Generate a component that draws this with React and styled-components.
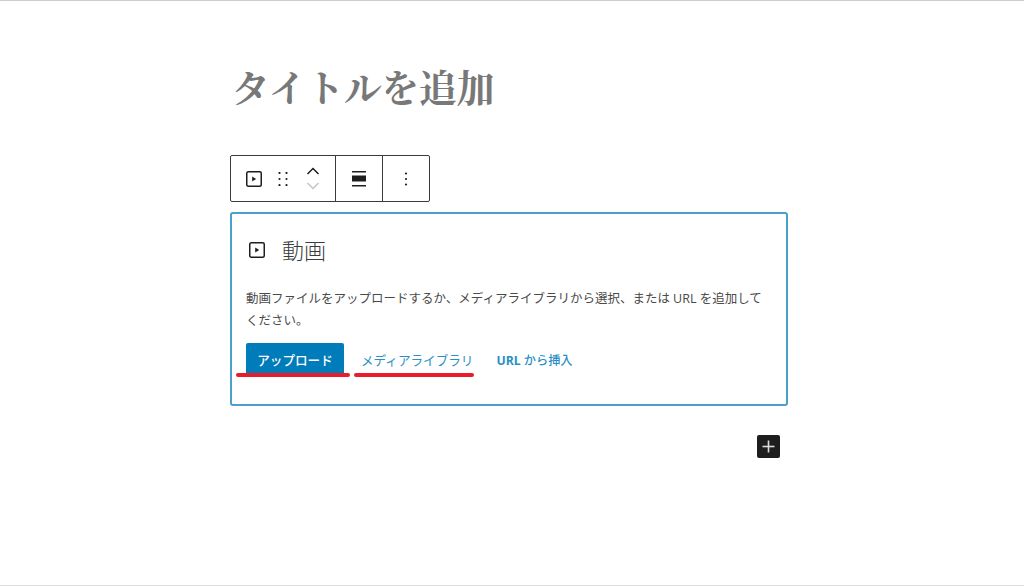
import React from "react";
import styled, { createGlobalStyle } from "styled-components";

const GlobalStyle = createGlobalStyle`
  html, body {
    margin: 0;
    padding: 0;
    background: #fff;
  }
  body {
    font-family: "Open Sans", "Noto Sans CJK JP", sans-serif;
    color: #1e1e1e;
  }
`;

const Page = styled.div`
  box-sizing: border-box;
  width: 1024px;
  height: 586px;
  overflow: hidden;
  padding-left: 230px;
  border-top: 1px solid #cfcbc4;
  border-bottom: 1px solid #dcdcdc;
  margin-bottom: 1px;
  display: flex;
`;

const Editor = styled.div`
  width: 558px;
  display: flex;
  flex-direction: column;
  align-items: flex-start;
`;

const Title = styled.h1`
  margin: 66px 0 0 2px;
  font-family: "Liberation Serif", "Noto Serif CJK JP", "Noto Sans CJK JP", serif;
  font-size: 37.6px;
  line-height: 45px;
  font-weight: 700;
  color: #787878;
`;

const Toolbar = styled.div`
  box-sizing: border-box;
  margin-top: 43px;
  width: 200px;
  height: 47px;
  display: flex;
  border: 1px solid #3a3a3a;
  border-radius: 2px;
`;

const ToolGroup = styled.div`
  width: ${(p) => p.$width}px;
  flex: none;
  box-sizing: border-box;
  display: flex;
  align-items: center;
  justify-content: center;
  border-right: ${(p) => (p.$last ? "none" : "1px solid #3a3a3a")};
`;

const BlockGroup = styled(ToolGroup)`
  justify-content: flex-start;
  padding-left: 14px;
`;

const DragHandle = styled.span`
  display: flex;
  margin: 0 18px 0 15px;
`;

const Arrows = styled.div`
  display: flex;
  flex-direction: column;
  align-items: center;
  gap: 7px;
`;

const Card = styled.div`
  box-sizing: border-box;
  margin-top: 10px;
  width: 558px;
  height: 194px;
  padding: 20px 14px 0;
  border: 2px solid #4a9fcb;
  border-radius: 3px;
`;

const CardHead = styled.div`
  display: flex;
  align-items: center;
  gap: 16px;
  height: 32px;
  padding-left: 2px;
`;

const CardTitle = styled.span`
  font-size: 22px;
  line-height: 32px;
  color: #3c3c3c;
  font-weight: 300;
`;

const Help = styled.p`
  margin: 22px 0 0;
  font-size: 12.5px;
  line-height: 22px;
  color: #4a4a4a;
`;

const Actions = styled.div`
  margin-top: 11px;
  display: flex;
  align-items: center;
`;

const Marked = styled.span`
  position: relative;
  display: inline-flex;
`;

const Underline = styled.span`
  position: absolute;
  left: ${(p) => p.$left}px;
  right: ${(p) => p.$right}px;
  bottom: -1px;
  height: 4px;
  border-radius: 2px;
  background: #ea1c2c;
`;

const PrimaryButton = styled.button`
  height: 33px;
  width: 98px;
  padding: 0;
  border: 0;
  border-radius: 2px;
  background: #007cba;
  color: #fff;
  font: 500 12.6px "Open Sans", "Noto Sans CJK JP", sans-serif;
`;

const LinkButton = styled.button`
  height: 33px;
  padding: 0;
  margin-left: ${(p) => p.$ml}px;
  border: 0;
  background: none;
  color: #2a8fc4;
  font: ${(p) => (p.$bold ? 500 : 400)} ${(p) => (p.$bold ? 12.2 : 12.6)}px "Open Sans", "Noto Sans CJK JP", sans-serif;
`;

const LinkLatin = styled.span`
  font-weight: 700;
`;

const Inserter = styled.button`
  align-self: flex-end;
  margin-top: 29px;
  margin-right: 8px;
  width: 23px;
  height: 23px;
  padding: 0;
  border: 0;
  border-radius: 2px;
  background: #1e1e1e;
  display: flex;
  align-items: center;
  justify-content: center;
`;

const VideoIcon = ({ size = 18 }) => (
  <svg width={size} height={size} viewBox="0 0 18 18" fill="none">
    <rect x="1.75" y="1.75" width="14.5" height="14.5" rx="1.5" stroke="#1e1e1e" strokeWidth="1.5" />
    <path d="M7.2 6.6v4.8L11.2 9z" fill="#1e1e1e" />
  </svg>
);

const DragIcon = () => (
  <svg width="10" height="14" viewBox="0 0 10 14" fill="#1e1e1e">
    {[1, 7, 13].map((y) =>
      [1.5, 8.5].map((x) => <circle key={`${x}-${y}`} cx={x} cy={y} r="1.1" />)
    )}
  </svg>
);

const Chevron = ({ up, color }) => (
  <svg width="14" height="8" viewBox="0 0 14 8" fill="none">
    <path d={up ? "M1.5 7L7 1.5 12.5 7" : "M1.5 1L7 6.5 12.5 1"} stroke={color} strokeWidth="1.5" />
  </svg>
);

const AlignIcon = () => (
  <svg width="14" height="16" viewBox="0 0 14 16" fill="#1e1e1e">
    <rect x="0" y="0" width="14" height="1.5" />
    <rect x="0" y="4.5" width="14" height="6" />
    <rect x="0" y="14" width="14" height="1.5" />
  </svg>
);

const MoreIcon = () => (
  <svg width="4" height="14" viewBox="0 0 4 14" fill="#1e1e1e">
    <circle cx="2" cy="1.5" r="1.1" />
    <circle cx="2" cy="7" r="1.1" />
    <circle cx="2" cy="12.5" r="1.1" />
  </svg>
);

const PlusIcon = () => (
  <svg width="13" height="13" viewBox="0 0 13 13" fill="#dcdcdc">
    <rect x="5.7" y="0.5" width="1.6" height="12" />
    <rect x="0.5" y="5.7" width="12" height="1.6" />
  </svg>
);

export default function App() {
  return (
    <Page>
      <GlobalStyle />
      <Editor>
        <Title>タイトルを追加</Title>
        <Toolbar>
          <BlockGroup $width={105}>
            <VideoIcon />
            <DragHandle>
              <DragIcon />
            </DragHandle>
            <Arrows>
              <Chevron up color="#1e1e1e" />
              <Chevron color="#c4c4c4" />
            </Arrows>
          </BlockGroup>
          <ToolGroup $width={47}>
            <AlignIcon />
          </ToolGroup>
          <ToolGroup $width={46} $last>
            <MoreIcon />
          </ToolGroup>
        </Toolbar>
        <Card>
          <CardHead>
            <VideoIcon />
            <CardTitle>動画</CardTitle>
          </CardHead>
          <Help>
            動画ファイルをアップロードするか、メディアライブラリから選択、または URL を追加してください。
          </Help>
          <Actions>
            <Marked>
              <PrimaryButton>アップロード</PrimaryButton>
              <Underline $left={-10} $right={-6} />
            </Marked>
            <Marked>
              <LinkButton $ml={17}>メディアライブラリ</LinkButton>
              <Underline $left={10} $right={-1} />
            </Marked>
            <LinkButton $ml={23} $bold><LinkLatin>URL</LinkLatin> から挿入</LinkButton>
          </Actions>
        </Card>
        <Inserter>
          <PlusIcon />
        </Inserter>
      </Editor>
    </Page>
  );
}
